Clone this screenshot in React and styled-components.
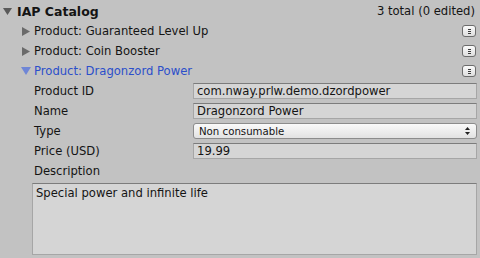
import styled, { createGlobalStyle } from 'styled-components';

const Global = createGlobalStyle`
  html, body {
    margin: 0;
    padding: 0;
    background: #c2c2c2;
  }
  body {
    font-family: "DejaVu Sans", "Liberation Sans", sans-serif;
    color: #141414;
  }
`;

const Panel = styled.div`
  width: 480px;
  height: 258px;
  box-sizing: border-box;
  padding-top: 1px;
  display: flex;
  flex-direction: column;
  background: #c2c2c2;
  overflow: hidden;
`;

const HeaderRow = styled.div`
  height: 20px;
  display: flex;
  align-items: center;
  padding: 0 5px 0 3px;
`;

const Title = styled.span`
  margin-left: 5px;
  font-weight: bold;
  font-size: 12.5px;
`;

const Count = styled.span`
  margin-left: auto;
  font-size: 11.6px;
`;

const ProductRow = styled.div`
  height: 20px;
  display: flex;
  align-items: center;
  padding: 0 4px 0 ${(p) => (p.$open ? 21 : 22)}px;
`;

const ProductName = styled.span`
  margin-left: ${(p) => (p.$open ? 3 : 4)}px;
  font-size: 11.6px;
  color: ${(p) => (p.$open ? '#2c4fca' : '#141414')};
`;

const MenuButton = styled.button`
  margin-left: auto;
  width: 14px;
  height: 12px;
  padding: 0;
  box-sizing: border-box;
  border: 1px solid #6c6c6c;
  border-radius: 3px;
  background: linear-gradient(#fbfbfb, #dedede);
  display: flex;
  flex-direction: column;
  align-items: center;
  justify-content: center;
  gap: 1px;
  span {
    width: 3px;
    height: 1px;
    background: #3c3c3c;
  }
`;

const Fields = styled.div`
  display: flex;
  flex-direction: column;
  padding: 0 3px 0 34px;
`;

const FieldRow = styled.div`
  height: 20px;
  display: grid;
  grid-template-columns: 159px 1fr;
  align-items: center;
`;

const Label = styled.span`
  font-size: 11.6px;
`;

const TextField = styled.div`
  height: 16px;
  box-sizing: border-box;
  border: 1px solid #a6a6a6;
  border-top-color: #7c7c7c;
  background: #d5d5d5;
  padding: 0 3px;
  font-size: 11.6px;
  line-height: 14px;
  white-space: nowrap;
  overflow: hidden;
`;

const Select = styled.div`
  height: 16px;
  box-sizing: border-box;
  border: 1px solid #8c8c8c;
  border-radius: 3px;
  background: linear-gradient(#fafafa, #e2e2e2);
  padding: 0 6px 0 5px;
  display: flex;
  align-items: center;
  justify-content: space-between;
  font-size: 10.2px;
`;

const Description = styled.div`
  margin: 2px 3px 0 32px;
  height: 72px;
  box-sizing: border-box;
  border: 1px solid #a6a6a6;
  border-top-color: #7c7c7c;
  background: #d5d5d5;
  padding: 2px 3px;
  font-size: 11.6px;
`;

const Arrow = ({ dir, color, w, h }) => (
  <svg width={w} height={h} viewBox={`0 0 ${w} ${h}`}>
    {dir === 'down' ? (
      <polygon points={`0,0 ${w},0 ${w / 2},${h}`} fill={color} />
    ) : (
      <polygon points={`0,0 ${w},${h / 2} 0,${h}`} fill={color} />
    )}
  </svg>
);

const Stepper = () => (
  <svg width="5" height="8" viewBox="0 0 5 8">
    <polygon points="2.5,0 5,3 0,3" fill="#222" />
    <polygon points="0,5 5,5 2.5,8" fill="#222" />
  </svg>
);

const Menu = () => (
  <MenuButton>
    <span />
    <span />
    <span />
  </MenuButton>
);

const products = ['Guaranteed Level Up', 'Coin Booster'];

export default function App() {
  return (
    <Panel>
      <Global />
      <HeaderRow>
        <Arrow dir="down" color="#595959" w={9} h={7} />
        <Title>IAP Catalog</Title>
        <Count>3 total (0 edited)</Count>
      </HeaderRow>
      {products.map((p) => (
        <ProductRow key={p}>
          <Arrow dir="right" color="#6a6a6a" w={8} h={9} />
          <ProductName>Product: {p}</ProductName>
          <Menu />
        </ProductRow>
      ))}
      <ProductRow $open>
        <Arrow dir="down" color="#6f86d6" w={10} h={8} />
        <ProductName $open>Product: Dragonzord Power</ProductName>
        <Menu />
      </ProductRow>
      <Fields>
        <FieldRow>
          <Label>Product ID</Label>
          <TextField>com.nway.prlw.demo.dzordpower</TextField>
        </FieldRow>
        <FieldRow>
          <Label>Name</Label>
          <TextField>Dragonzord Power</TextField>
        </FieldRow>
        <FieldRow>
          <Label>Type</Label>
          <Select>
            <span>Non consumable</span>
            <Stepper />
          </Select>
        </FieldRow>
        <FieldRow>
          <Label>Price (USD)</Label>
          <TextField>19.99</TextField>
        </FieldRow>
        <FieldRow>
          <Label>Description</Label>
        </FieldRow>
      </Fields>
      <Description>Special power and infinite life</Description>
    </Panel>
  );
}
